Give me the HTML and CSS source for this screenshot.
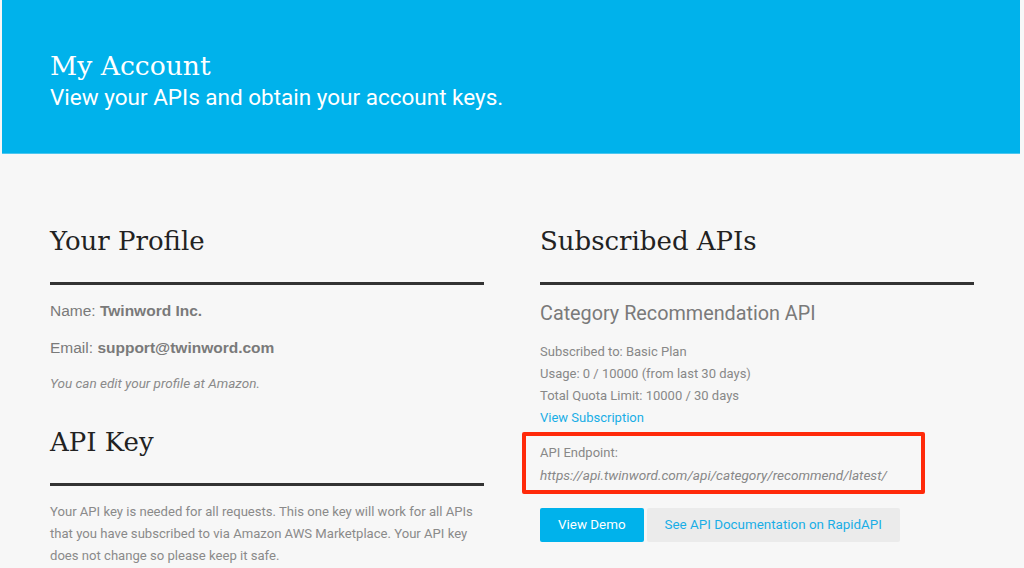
FILE: index.html
```html
<!DOCTYPE html>
<html lang="en">
<head>
    <meta charset="UTF-8">
    <meta name="viewport" content="width=device-width, initial-scale=1.0">
    <title>My Account</title>
    <link rel="stylesheet" href="styles.css">
</head>
<body>
    <header class="banner">
        <h1>My Account</h1>
        <p>View your APIs and obtain your account keys.</p>
    </header>

    <main class="account">
        <section class="col">
            <h2 class="section-title">Your Profile</h2>
            <p class="profile-line">Name: <strong>Twinword Inc.</strong></p>
            <p class="profile-line">Email: <strong>support@twinword.com</strong></p>
            <p class="profile-note">You can edit your profile at Amazon.</p>

            <h2 class="section-title key-title">API Key</h2>
            <p class="key-text">Your API key is needed for all requests. This one key will work for all APIs that you have subscribed to via Amazon AWS Marketplace. Your API key does not change so please keep it safe.</p>
        </section>

        <section class="col">
            <h2 class="section-title">Subscribed APIs</h2>
            <h3 class="api-name">Category Recommendation API</h3>
            <div class="api-info">
                <div>Subscribed to: Basic Plan</div>
                <div>Usage: 0 / 10000 (from last 30 days)</div>
                <div>Total Quota Limit: 10000 / 30 days</div>
                <a href="#">View Subscription</a>
            </div>
            <div class="api-info endpoint">
                <div>API Endpoint:</div>
                <div class="endpoint-url">https://api.twinword.com/api/category/recommend/latest/</div>
            </div>
            <div class="api-buttons">
                <a href="#" class="btn btn-primary">View Demo</a>
                <a href="#" class="btn btn-light">See API Documentation on RapidAPI</a>
            </div>
        </section>
    </main>
</body>
</html>
```

FILE: styles.css
```css
/* page */
body {
    margin: 0;
    padding: 0;
    background-color: #f7f7f7;
    font-family: Roboto, "Liberation Sans", sans-serif;
    color: #808080;
}

/* blue top banner */
.banner {
    margin: 0 4px 0 2px;
    height: 154px;
    box-sizing: border-box;
    padding: 49px 48px 0;
    background-color: #00b2eb;
    border-bottom: 1px solid #4cc6ef;
    color: #fff;
}
.banner h1 {
    margin: 0;
    font-family: "DejaVu Serif", serif;
    font-weight: normal;
    font-size: 26.6px;
    line-height: 34px;
}
.banner p {
    margin: 0;
    font-size: 22.5px;
    line-height: 28px;
}

/* two columns */
.account {
    display: grid;
    grid-template-columns: 434px 434px;
    column-gap: 56px;
    padding: 67px 50px 0;
}
.section-title {
    margin: 0;
    padding-bottom: 21px;
    border-bottom: 3px solid #333;
    font-family: "DejaVu Serif", serif;
    font-weight: normal;
    font-size: 26px;
    line-height: 40px;
    color: #222;
}
.key-title {
    margin-top: 30px;
}

/* profile */
.profile-line {
    margin: 16px 0 0;
    font-family: "Liberation Sans", Arial, sans-serif;
    font-size: 15.5px;
    line-height: 20px;
    color: #7a7a7a;
}
.profile-line + .profile-line {
    margin-top: 17px;
}
.profile-note {
    margin: 16px 0 0;
    font-size: 13.5px;
    font-style: italic;
    line-height: 18px;
    color: #8a8a8a;
}
.key-text {
    margin: 15px 0 0;
    font-size: 13.1px;
    line-height: 22px;
    color: #8a8a8a;
}

/* subscribed api */
.api-name {
    margin: 15px 0 0;
    font-size: 19.8px;
    font-weight: normal;
    line-height: 28px;
    color: #7a7a7a;
}
.api-info {
    margin-top: 13px;
    font-size: 13px;
    line-height: 22px;
    color: #888;
}
.api-info a {
    color: #19aee6;
    text-decoration: none;
}
.endpoint {
    position: relative;
}
/* red annotation box */
.endpoint::after {
    content: "";
    position: absolute;
    left: -18px;
    top: -10px;
    width: 395px;
    height: 54px;
    border: 4px solid #ff2a0a;
    border-radius: 2px;
}
.endpoint-url {
    font-size: 13.6px;
    font-style: italic;
}
.api-buttons {
    display: flex;
    gap: 3px;
    margin-top: 22px;
}
.btn {
    display: block;
    height: 34px;
    line-height: 34px;
    padding: 0 18px;
    border-radius: 2px;
    font-size: 13.4px;
    text-decoration: none;
}
.btn-primary {
    background-color: #00b2eb;
    color: #fff;
}
.btn-light {
    background-color: #ebebeb;
    color: #19aee6;
}
```
